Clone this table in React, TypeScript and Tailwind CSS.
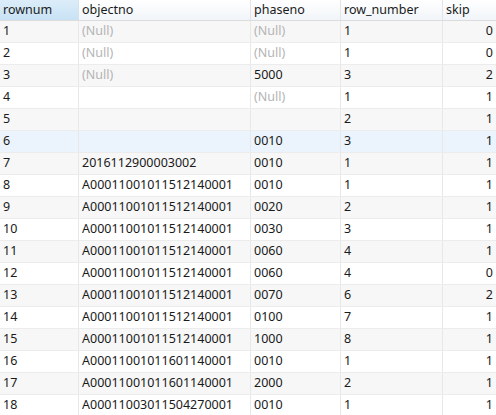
import React from "react";

type Row = [string, string | null, string | null, string, string];

const rows: Row[] = [
  ["1", null, null, "1", "0"],
  ["2", null, null, "1", "0"],
  ["3", null, "5000", "3", "2"],
  ["4", "", null, "1", "1"],
  ["5", "", "", "2", "1"],
  ["6", "", "0010", "3", "1"],
  ["7", "2016112900003002", "0010", "1", "1"],
  ["8", "A00011001011512140001", "0010", "1", "1"],
  ["9", "A00011001011512140001", "0020", "2", "1"],
  ["10", "A00011001011512140001", "0030", "3", "1"],
  ["11", "A00011001011512140001", "0060", "4", "1"],
  ["12", "A00011001011512140001", "0060", "4", "0"],
  ["13", "A00011001011512140001", "0070", "6", "2"],
  ["14", "A00011001011512140001", "0100", "7", "1"],
  ["15", "A00011001011512140001", "1000", "8", "1"],
  ["16", "A00011001011601140001", "0010", "1", "1"],
  ["17", "A00011001011601140001", "2000", "2", "1"],
  ["18", "A00011003011504270001", "0010", "1", "1"],
];

function Cell({ v, w, right, last }: { v: string | null; w: string; right?: boolean; last?: boolean }) {
  return (
    <div
      className={`${w} h-full flex items-center px-[3px] ${right ? "justify-end" : ""} ${last ? "" : "border-r border-[#e8e8e8]"} overflow-hidden whitespace-nowrap`}
    >
      {v === null ? <span className="text-[#b4b4b4]">(Null)</span> : <span>{v}</span>}
    </div>
  );
}

export default function App() {
  return (
    <div
      className="w-[496px] h-[415px] bg-white overflow-hidden text-[12.5px] text-[#1a1a1a]"
      style={{ fontFamily: '"Noto Sans", "Noto Sans CJK SC", sans-serif' }}
    >
      <div className="flex h-[21px] border-b border-[#dcdcdc] bg-gradient-to-b from-[#ffffff] to-[#f1f5f9]">
        <div className="w-[79px] h-full flex items-center px-[3px] bg-gradient-to-b from-[#dcedf9] to-[#c8e2f5] border-r border-[#d6e2ec]">
          rownum
        </div>
        <div className="w-[172px] h-full flex items-center px-[3px] border-r border-[#e4e4e4]">objectno</div>
        <div className="w-[90px] h-full flex items-center px-[3px] border-r border-[#e4e4e4]">phaseno</div>
        <div className="w-[102px] h-full flex items-center px-[3px] border-r border-[#e4e4e4]">row_number</div>
        <div className="w-[53px] h-full flex items-center px-[3px]">skip</div>
      </div>
      {rows.map((r, i) => {
        const bg = r[0] === "6" ? "bg-[#ebf4fc]" : i % 2 === 0 ? "bg-[#f7f7f7]" : "bg-white";
        return (
          <div key={i} className={`flex h-[22px] border-b border-[#ececec] ${bg}`}>
            <Cell v={r[0]} w="w-[79px]" />
            <Cell v={r[1]} w="w-[172px]" />
            <Cell v={r[2]} w="w-[90px]" />
            <Cell v={r[3]} w="w-[102px]" />
            <Cell v={r[4]} w="w-[53px]" right last />
          </div>
        );
      })}
    </div>
  );
}
